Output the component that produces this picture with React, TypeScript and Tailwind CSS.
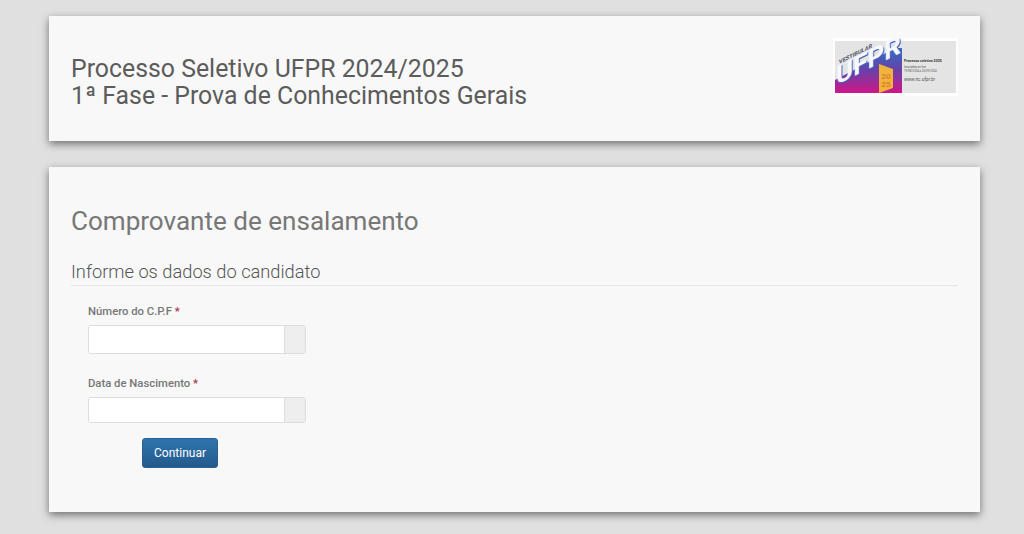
const FIELDS = [
  { label: 'Número do C.P.F', inputClass: 'h-[29px]', gap: 'mt-[23px]' },
  { label: 'Data de Nascimento', inputClass: 'h-[26px]', gap: 'mt-[23px]' },
]

function Logo() {
  return (
    <svg width="125" height="58" viewBox="0 0 125 58" className="block">
      <defs>
        <linearGradient id="ufpr-bar" x1="0" y1="0" x2="0" y2="1">
          <stop offset="0" stopColor="#2f6fc4" />
          <stop offset="0.5" stopColor="#6a3fa8" />
          <stop offset="1" stopColor="#d0158a" />
        </linearGradient>
      </defs>
      <rect width="125" height="58" fill="#ffffff" />
      <rect x="2" y="3" width="121" height="52" fill="#e4e4e4" />
      <polygon points="2,42 62,10 69,10 69,55 2,55" fill="url(#ufpr-bar)" />
      <polygon points="46,26 60,31 60,50 46,55" fill="#f2b33d" />
      <text x="53" y="41" fontSize="8" fontWeight="700" fill="#d9812a" textAnchor="middle" fontFamily="Roboto, sans-serif">20</text>
      <text x="53" y="49" fontSize="8" fontWeight="700" fill="#d9812a" textAnchor="middle" fontFamily="Roboto, sans-serif">25</text>
      <text fontSize="26" fontWeight="700" fill="#3f62c4" transform="matrix(1 -0.5 0 1 4 48)" fontFamily="Roboto, sans-serif">UFPR</text>
      <text fontSize="26" fontWeight="700" fill="#f6f8fe" transform="matrix(1 -0.5 0 1 3 47)" fontFamily="Roboto, sans-serif">UFPR</text>
      <text fontSize="5.6" fontWeight="700" fill="#4a4f6a" transform="matrix(1 -0.5 0 1 6 26)" fontFamily="Roboto, sans-serif">VESTIBULAR</text>
      <text x="71" y="24" fontSize="3.6" fontWeight="700" fill="#333333" fontFamily="Roboto, sans-serif">Processo seletivo 2025</text>
      <text x="71" y="30" fontSize="2.8" fill="#555555" fontFamily="Roboto, sans-serif">Inscrições on-line</text>
      <text x="71" y="34" fontSize="2.8" fill="#555555" fontFamily="Roboto, sans-serif">19/08/2024 a 25/09/2024</text>
      <text x="71" y="43" fontSize="4.8" fontStyle="italic" fill="#555555" fontFamily="Roboto, sans-serif">www.nc.ufpr.br</text>
    </svg>
  )
}

export default function App() {
  return (
    <div className="min-h-[534px] bg-[#e0e0e0] pt-[16px] pl-[49px] font-['Roboto',sans-serif]">
      <div className="flex h-[125px] w-[931px] items-start justify-between bg-[#f8f8f8] pl-[22px] pr-[22px] shadow-[0_3px_8px_rgba(0,0,0,0.5)]">
        <h1 className="pt-[39px] text-[24.85px] leading-[27px] text-[#5c5c5c]">
          Processo Seletivo UFPR 2024/2025
          <br />
          1ª Fase - Prova de Conhecimentos Gerais
        </h1>
        <div className="mt-[22px]">
          <Logo />
        </div>
      </div>

      <div className="mt-[26px] h-[345px] w-[931px] bg-[#f8f8f8] px-[22px] pt-[39px] shadow-[0_3px_8px_rgba(0,0,0,0.5)]">
        <h2 className="text-[26.05px] leading-[30px] text-[#777777]">Comprovante de ensalamento</h2>
        <h3 className="mt-[23px] border-b border-[#e5e5e5] text-[18.25px] font-light leading-[26px] text-[#555555]">
          Informe os dados do candidato
        </h3>
        <form className="pl-[17px] pt-[19px]">
          {FIELDS.map((f, i) => (
            <div key={f.label} className={i > 0 ? f.gap : ''}>
              <label className="block text-[11.3px] font-medium leading-[14px] text-[#777777]">
                {f.label} <span className="text-[#a8324a]">*</span>
              </label>
              <div className={`mt-[6px] flex w-[218px] overflow-hidden rounded-[3px] border border-[#dddddd] ${f.inputClass}`}>
                <input type="text" className="w-[195px] bg-white" />
                <span className="flex-1 border-l border-[#dddddd] bg-[#eeeeee]" />
              </div>
            </div>
          ))}
          <button
            type="button"
            className="ml-[54px] mt-[15px] block h-[30px] w-[76px] rounded-[3px] border border-[#2a5f92] bg-gradient-to-b from-[#2e74ad] to-[#245a8c] text-[12px] text-white"
          >
            Continuar
          </button>
        </form>
      </div>
    </div>
  )
}
